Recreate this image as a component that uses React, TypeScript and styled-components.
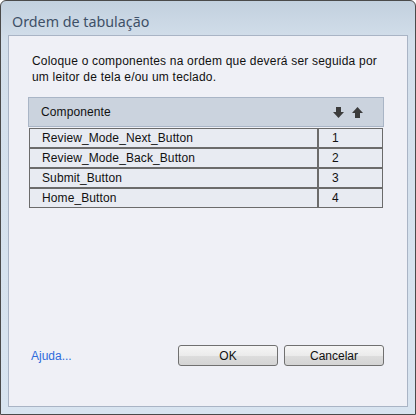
import React from 'react';
import styled, { createGlobalStyle } from 'styled-components';

const GlobalStyle = createGlobalStyle`
  html, body {
    margin: 0;
    padding: 0;
    background: #ffffff;
  }
  * {
    box-sizing: border-box;
  }
`;

const Window = styled.div`
  width: 416px;
  height: 415px;
  display: flex;
  flex-direction: column;
  border: 1px solid #4a4a4a;
  border-radius: 6px 6px 0 0;
  background: linear-gradient(to bottom, #c2d0de 0px, #d3dfeb 40px, #d8e4f0 100%);
  overflow: hidden;
  font-family: 'Liberation Sans', Arial, sans-serif;
`;

const TitleBar = styled.div`
  height: 34px;
  display: flex;
  align-items: center;
  padding: 6px 0 0 11px;
  font-family: 'Noto Sans', 'Open Sans', sans-serif;
  font-size: 14.3px;
  color: #3e5067;
`;

const Panel = styled.div`
  flex: 1;
  margin: 0 7px 7px 7px;
  border: 1px solid #a9b4c5;
  background: #eff0f6;
  display: flex;
  flex-direction: column;
  padding: 17px 23px 40px 19px;
`;

const Intro = styled.p`
  margin: 0 0 12px 4px;
  font-size: 12px;
  letter-spacing: 0.2px;
  line-height: 16px;
  color: #111;
`;

const HeaderRow = styled.div`
  height: 30px;
  display: flex;
  align-items: center;
  justify-content: space-between;
  background: #cbd3de;
  border: 1px solid #a9b5c6;
  padding: 0 20px 0 12px;
  font-size: 12px;
  letter-spacing: 0.1px;
  color: #111;
  margin-bottom: 1px;
`;

const Arrows = styled.div`
  display: flex;
  gap: 8px;
  align-items: center;
`;

const Row = styled.div`
  display: flex;
  height: 20px;
  margin: 0 1px;
`;

const Cell = styled.div<{ $width?: number }>`
  ${(p) => (p.$width ? `width: ${p.$width}px;` : 'flex: 1;')}
  border: 1px solid #6b6b6b;
  background: #e8ebf2;
  display: flex;
  align-items: center;
  padding-left: ${(p) => (p.$width ? '13px' : '12px')};
  font-size: 12px;
  letter-spacing: 0.1px;
  color: #111;
`;

const Footer = styled.div`
  margin-top: auto;
  display: flex;
  align-items: center;
`;

const HelpLink = styled.a`
  font-size: 12px;
  color: #2d6bdc;
  text-decoration: none;
  margin-left: 3px;
  cursor: pointer;
  flex: 1;
`;

const Button = styled.button`
  width: 100px;
  height: 21px;
  margin-left: 6px;
  border: 1px solid #707070;
  border-radius: 3px;
  background: linear-gradient(to bottom, #f6f6f6 0%, #ebebeb 50%, #dddddd 51%, #d4d4d4 100%);
  font-family: 'Liberation Sans', Arial, sans-serif;
  font-size: 12px;
  color: #111;
  padding: 0;
`;

const ArrowIcon = ({ up }: { up?: boolean }) => (
  <svg width="11" height="11" viewBox="0 0 11 11">
    <g fill="#3c3c3c" transform={up ? 'rotate(180 5.5 5.5)' : undefined}>
      <rect x="3" y="0" width="5" height="5" />
      <polygon points="0,5 11,5 5.5,11" />
    </g>
  </svg>
);

const items = [
  'Review_Mode_Next_Button',
  'Review_Mode_Back_Button',
  'Submit_Button',
  'Home_Button',
];

export default function App() {
  return (
    <>
      <GlobalStyle />
      <Window>
        <TitleBar>Ordem de tabulação</TitleBar>
        <Panel>
          <Intro>
            Coloque o componentes na ordem que deverá ser seguida por
            <br />
            um leitor de tela e/ou um teclado.
          </Intro>
          <HeaderRow>
            <span>Componente</span>
            <Arrows>
              <ArrowIcon />
              <ArrowIcon up />
            </Arrows>
          </HeaderRow>
          {items.map((name, i) => (
            <Row key={name}>
              <Cell>{name}</Cell>
              <Cell $width={65}>{i + 1}</Cell>
            </Row>
          ))}
          <Footer>
            <HelpLink>Ajuda...</HelpLink>
            <Button>OK</Button>
            <Button>Cancelar</Button>
          </Footer>
        </Panel>
      </Window>
    </>
  );
}
